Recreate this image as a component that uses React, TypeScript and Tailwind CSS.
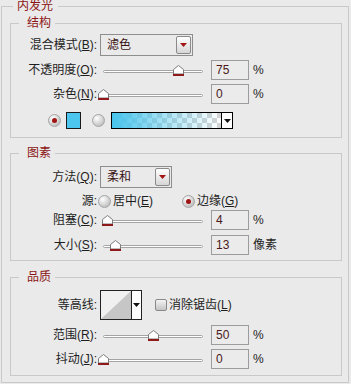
import React from "react";

const Label = ({ text, k }: { text: string; k?: string }) => (
  <div className="w-[86px] shrink-0 text-right">
    {text}
    {k && (
      <>
        (<span className="underline">{k}</span>)
      </>
    )}
    :
  </div>
);

const Arrow = ({ color = "#a31515" }: { color?: string }) => (
  <svg width="7" height="4" viewBox="0 0 7 4">
    <polygon points="0,0 7,0 3.5,4" fill={color} />
  </svg>
);

const Select = ({ w, text }: { w: string; text: string }) => (
  <div className={`ml-[3px] flex h-[22px] items-center justify-between border border-[#8e8e8e] pl-[6px] pr-[1px] text-[#3a1414] ${w}`}>
    <span>{text}</span>
    <div className="flex h-[18px] w-[15px] items-center justify-center rounded-[2px] border border-[#8a8a8a] bg-linear-to-b from-white to-[#d6d6d6]">
      <Arrow />
    </div>
  </div>
);

const Thumb = () => (
  <svg width="11" height="11" viewBox="0 0 11 11">
    <path d="M5.5 0.5 L10.5 4.5 V9 H0.5 V4.5 Z" fill="#ffffff" stroke="#7c7c7c" />
    <rect x="0" y="9" width="11" height="2" fill="#8f1a1a" />
  </svg>
);

const Slider = ({ pos }: { pos: number }) => (
  <div className="relative ml-[3px] flex h-full w-[108px] items-center pl-[3px]">
    <div className="mt-[2px] h-[3px] w-[100px] rounded-full border border-[#a4a4a4] bg-white" />
    <div className="absolute top-[calc(50%-5px)] h-[11px] w-[11px]" style={{ left: pos - 2 }}>
      <Thumb />
    </div>
  </div>
);

const Val = ({ v, unit }: { v: string; unit: string }) => (
  <>
    <div className="ml-[3px] h-[20px] w-[38px] border border-[#9c9c9c] bg-[#ebebeb] pl-[4px] leading-[18px] text-[#4a1a1a]">
      {v}
    </div>
    <span className="ml-[4px]">{unit}</span>
  </>
);

const Radio = ({ on }: { on?: boolean }) => (
  <div className="flex h-[13px] w-[13px] shrink-0 items-center justify-center rounded-full border border-[#a5a5a5] bg-[radial-gradient(circle_at_35%_30%,#ffffff,#cacaca_65%,#a9a9a9)]">
    {on && <div className="h-[5px] w-[5px] rounded-full bg-[#a01414]" />}
  </div>
);

const SliderRow = ({ text, k, pos, v, unit = "%", cls }: { text: string; k: string; pos: number; v: string; unit?: string; cls: string }) => (
  <div className={`flex h-[20px] items-center ${cls}`}>
    <Label text={text} k={k} />
    <Slider pos={pos} />
    <Val v={v} unit={unit} />
  </div>
);

const Legend = ({ children }: { children: React.ReactNode }) => (
  <legend className="ml-[8px] pl-[8px] pr-[4px] leading-[14px] text-[#8c1515]">{children}</legend>
);

export default function App() {
  return (
    <div className="h-[384px] w-[351px] overflow-hidden bg-[#eaeaea] font-['Liberation_Sans','Noto_Sans_CJK_SC',sans-serif] text-[12px] leading-[14px] text-[#1e1e1e]">
      <fieldset className="ml-[1px] w-[348px] border border-[#c9c9c9] pb-[6px]">
        <legend className="ml-[11px] pl-[4px] pr-[5px] leading-[13px] text-[#8c1515]">内发光</legend>

        {/* 结构 */}
        <fieldset className="ml-[8px] mt-[3px] w-[332px] border border-[#c9c9c9] pb-[8px]">
          <Legend>结构</Legend>
          <div className="mt-[4px] flex h-[22px] items-center">
            <Label text="混合模式" k="B" />
            <Select w="w-[93px]" text="滤色" />
          </div>
          <SliderRow text="不透明度" k="O" pos={75} v="75" cls="mt-[4px]" />
          <SliderRow text="杂色" k="N" pos={0} v="0" cls="mt-[4px]" />
          <div className="mt-[8px] flex h-[17px] items-center pl-[37px]">
            <Radio on />
            <div className="ml-[5px] h-[17px] w-[15px] border border-[#1a1a1a] bg-[#4cc6ee]" />
            <div className="ml-[11px]">
              <Radio />
            </div>
            <div className="ml-[6px] flex h-[17px] w-[122px] border border-black">
              <div className="flex-1 bg-[conic-gradient(#d4d4d4_25%,#ffffff_0_50%,#d4d4d4_0_75%,#ffffff_0)] bg-[length:10px_10px]">
                <div className="h-full w-full bg-linear-to-r from-[#47c4ec] via-[#47c4ec]/45 to-transparent" />
              </div>
              <div className="flex w-[11px] items-center justify-center border-l border-black bg-white">
                <Arrow color="#111111" />
              </div>
            </div>
          </div>
        </fieldset>

        {/* 图素 */}
        <fieldset className="ml-[8px] mt-[8px] w-[332px] border border-[#c9c9c9] pb-[5px]">
          <Legend>图素</Legend>
          <div className="mt-[6px] flex h-[22px] items-center">
            <Label text="方法" k="Q" />
            <Select w="w-[72px]" text="柔和" />
          </div>
          <div className="mt-[6px] flex h-[14px] items-center">
            <Label text="源" />
            <div className="ml-[1px] flex w-[84px] items-center">
              <Radio />
              <span className="ml-[2px]">
                居中(<span className="underline">E</span>)
              </span>
            </div>
            <Radio on />
            <span className="ml-[2px]">
              边缘(<span className="underline">G</span>)
            </span>
          </div>
          <SliderRow text="阻塞" k="C" pos={4} v="4" cls="mt-[2px]" />
          <SliderRow text="大小" k="S" pos={12} v="13" unit="像素" cls="mt-[5px]" />
        </fieldset>

        {/* 品质 */}
        <fieldset className="ml-[8px] mt-[9px] w-[332px] border border-[#c9c9c9] pb-[6px]">
          <Legend>品质</Legend>
          <div className="mt-[6px] flex h-[30px] items-center">
            <Label text="等高线" />
            <div className="ml-[3px] flex h-[30px] w-[42px] border border-[#222222]">
              <div className="flex-1 bg-[#f0f0f0]">
                <svg width="30" height="28" viewBox="0 0 30 28" className="block">
                  <polygon points="0,28 30,0 30,28" fill="#c6c6c6" />
                </svg>
              </div>
              <div className="flex w-[11px] items-center justify-center border-l border-[#222222] bg-white">
                <Arrow color="#111111" />
              </div>
            </div>
            <div className="ml-[13px] h-[12px] w-[12px] rounded-[2px] border border-[#8a8a8a] bg-linear-to-b from-[#f4f4f4] to-[#c4c4c4]" />
            <span className="ml-[2px]">
              消除锯齿(<span className="underline">L</span>)
            </span>
          </div>
          <SliderRow text="范围" k="R" pos={50} v="50" cls="mt-[5px]" />
          <SliderRow text="抖动" k="J" pos={0} v="0" cls="mt-[4px]" />
        </fieldset>
      </fieldset>
    </div>
  );
}
